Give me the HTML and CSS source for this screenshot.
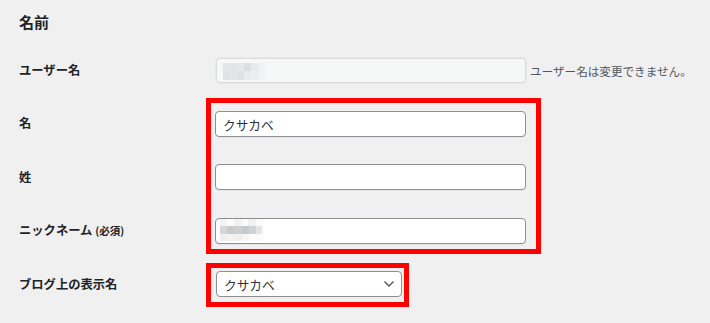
FILE: index.html
```html
<!DOCTYPE html>
<html lang="ja">
<head>
  <meta charset="UTF-8">
  <title>プロフィール - 名前</title>
  <link rel="stylesheet" href="styles.css">
</head>
<body>
  <div class="profile-page">
    <h2 class="section-title">名前</h2>

    <div class="form-row">
      <label class="row-label" for="user_login">ユーザー名</label>
      <div class="row-field">
        <div class="input-wrap">
          <input type="text" id="user_login" class="text-input is-disabled" value="" disabled>
          <svg class="mosaic" width="42" height="17" viewBox="0 0 42 17">
            <rect x="0" y="0" width="42" height="17" fill="#f1f2f3"/>
            <rect x="0" y="0" width="7" height="8" fill="#e4e5e6"/>
            <rect x="7" y="0" width="7" height="8" fill="#e2e4e6"/>
            <rect x="14" y="0" width="7" height="8" fill="#e6e8ea"/>
            <rect x="21" y="0" width="7" height="8" fill="#dcdedf"/>
            <rect x="28" y="0" width="8" height="8" fill="#e8e9ea"/>
            <rect x="0" y="8" width="7" height="9" fill="#e0e2e3"/>
            <rect x="7" y="8" width="7" height="9" fill="#e3e6e8"/>
            <rect x="14" y="8" width="7" height="9" fill="#dfe1e3"/>
            <rect x="21" y="8" width="7" height="9" fill="#e9eaeb"/>
            <rect x="28" y="8" width="8" height="9" fill="#edeeef"/>
          </svg>
        </div>
        <span class="field-note">ユーザー名は変更できません。</span>
      </div>
    </div>

    <div class="form-row">
      <label class="row-label" for="first_name">名</label>
      <div class="row-field">
        <input type="text" id="first_name" class="text-input" value="クサカベ">
      </div>
    </div>

    <div class="form-row">
      <label class="row-label" for="last_name">姓</label>
      <div class="row-field">
        <input type="text" id="last_name" class="text-input" value="">
      </div>
    </div>

    <div class="form-row">
      <label class="row-label" for="nickname">ニックネーム <span class="required">(必須)</span></label>
      <div class="row-field">
        <div class="input-wrap">
          <input type="text" id="nickname" class="text-input" value="">
          <svg class="mosaic mosaic-nick" width="44" height="22" viewBox="0 0 44 22">
            <rect x="0" y="0" width="44" height="22" fill="#fbfbfb"/>
            <rect x="0" y="0" width="7" height="7" fill="#f3f3f3"/>
            <rect x="14" y="0" width="8" height="7" fill="#f4f2f0"/>
            <rect x="28" y="0" width="8" height="7" fill="#f0f0f0"/>
            <rect x="0" y="7" width="7" height="8" fill="#d4d6d7"/>
            <rect x="7" y="7" width="7" height="8" fill="#c9cbca"/>
            <rect x="14" y="7" width="8" height="8" fill="#cdd0d2"/>
            <rect x="22" y="7" width="7" height="8" fill="#c6c9cb"/>
            <rect x="29" y="7" width="7" height="8" fill="#cfd2d4"/>
            <rect x="36" y="7" width="6" height="8" fill="#e2e4e5"/>
            <rect x="0" y="15" width="7" height="7" fill="#eeeeee"/>
            <rect x="7" y="15" width="7" height="7" fill="#f4f3f2"/>
            <rect x="14" y="15" width="8" height="7" fill="#f1f0ef"/>
            <rect x="22" y="15" width="7" height="7" fill="#f6f6f6"/>
          </svg>
        </div>
      </div>
    </div>

    <div class="form-row">
      <label class="row-label" for="display_name">ブログ上の表示名</label>
      <div class="row-field">
        <div class="select-wrap">
          <select id="display_name" class="select-input">
            <option selected>クサカベ</option>
          </select>
          <svg class="chevron" width="12" height="8" viewBox="0 0 12 8">
            <path d="M1.5 1.5 L6 6 L10.5 1.5" fill="none" stroke="#50575e" stroke-width="1.4"/>
          </svg>
        </div>
      </div>
    </div>

    <div class="highlight highlight-names"></div>
    <div class="highlight highlight-display"></div>
  </div>
</body>
</html>
```

FILE: styles.css
```css
:root {
  --bg-color: #f0f0f1;
  --text-color: #1d2327;
  --input-text: #2c3338;
  --input-border: #8c8f94;
  --note-color: #50575e;
  --mark-color: #ff0000;
}

* {
  margin: 0;
  padding: 0;
  box-sizing: border-box;
}

body {
  font-family: "Noto Sans CJK JP", "Liberation Sans", sans-serif;
  background-color: var(--bg-color);
  color: var(--text-color);
}

.profile-page {
  position: relative;
  width: 710px;
  height: 323px;
  padding-left: 19px;
  overflow: hidden;
}

.section-title {
  font-size: 15px;
  font-weight: bold;
  line-height: 20px;
  padding: 12px 0;
}

.form-row {
  display: flex;
  align-items: center;
  height: 53.4px;
}

.row-label {
  width: 196px;
  flex-shrink: 0;
  font-size: 12.3px;
  font-weight: bold;
  line-height: 1.4;
}

.required {
  font-size: 10.5px;
}

.row-field {
  display: flex;
  align-items: center;
  gap: 4px;
}

.input-wrap {
  position: relative;
}

.text-input {
  display: block;
  width: 311px;
  height: 26px;
  padding: 0 7px;
  border: 1px solid var(--input-border);
  border-radius: 4px;
  background-color: white;
  color: var(--input-text);
  font-family: inherit;
  font-size: 12.7px;
  box-shadow: 0 1px 0 rgba(0, 0, 0, 0.04);
}

.text-input.is-disabled {
  width: 310px;
  height: 25px;
  margin-left: 1px;
  background-color: #f6f7f7;
  border-color: #dcdcde;
  box-shadow: 0 0 0 1px #e8e8e9;
}

.mosaic {
  position: absolute;
  left: 8px;
  top: 5px;
}

.mosaic-nick {
  left: 5px;
  top: 1px;
}

.field-note {
  font-size: 11.6px;
  color: var(--note-color);
}

.select-wrap {
  position: relative;
  margin-left: 1px;
}

.select-input {
  display: block;
  width: 186px;
  height: 26px;
  padding: 0 24px 0 7px;
  border: 1px solid var(--input-border);
  border-radius: 4px;
  background-color: white;
  color: var(--input-text);
  font-family: inherit;
  font-size: 12.7px;
  appearance: none;
  -webkit-appearance: none;
}

.chevron {
  position: absolute;
  right: 7px;
  top: 9px;
  pointer-events: none;
}

.highlight {
  position: absolute;
  border: 5px solid var(--mark-color);
  pointer-events: none;
}

.highlight-names {
  left: 206px;
  top: 98px;
  width: 335px;
  height: 156px;
}

.highlight-display {
  left: 206px;
  top: 263px;
  width: 203px;
  height: 44px;
}
```
